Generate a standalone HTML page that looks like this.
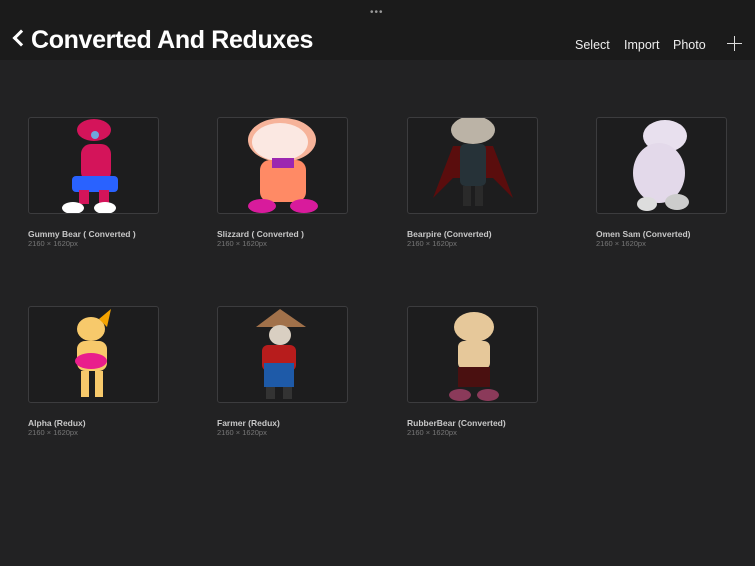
<!DOCTYPE html>
<html><head><meta charset="utf-8"><style>
*{margin:0;padding:0;box-sizing:border-box}
body{width:755px;height:566px;background:#222223;font-family:"Liberation Sans",sans-serif;position:relative;overflow:hidden;color:#fff}
.hdr{position:absolute;left:0;top:0;width:755px;height:60px;background:#1b1b1b}
.dots{position:absolute;left:370px;top:7px;font-size:10px;color:#999;letter-spacing:1px}
.title{position:absolute;left:31px;top:26px;font-size:25px;font-weight:bold;letter-spacing:-0.35px}
.back{position:absolute;top:32px;width:12px;height:12px;border-left:3px solid #fff;border-bottom:3px solid #fff;transform:rotate(45deg);left:15px}
.nav{position:absolute;top:38px;font-size:12.5px;color:#eee}
.plus{position:absolute;left:727px;top:36px;width:15px;height:15px}
.plus:before{content:"";position:absolute;left:7px;top:0;width:1px;height:15px;background:#ddd}
.plus:after{content:"";position:absolute;left:0;top:7px;width:15px;height:1px;background:#ddd}
.card{position:absolute;width:131px;height:97px;background:#1d1d1e;border:1px solid #3c3c3e;border-radius:3px;overflow:hidden}
.name{position:absolute;font-size:8.5px;font-weight:bold;color:#c8c8c8}
.sz{position:absolute;font-size:7.5px;color:#777}
.card svg{position:absolute;left:0;top:0}
</style></head><body>
<div class="hdr"></div>
<div class="dots">•••</div>
<div class="back"></div>
<div class="title">Converted And Reduxes</div>
<div class="nav" style="left:575px">Select</div>
<div class="nav" style="left:624px">Import</div>
<div class="nav" style="left:673px">Photo</div>
<div class="plus"></div>

<div class="card" style="left:28px;top:117px"><svg width="131" height="97">
<ellipse cx="65" cy="12" rx="17" ry="11" fill="#d4145a"/><circle cx="66" cy="17" r="4" fill="#6fa8dc"/>
<rect x="52" y="26" width="30" height="38" rx="10" fill="#d4145a"/><rect x="43" y="58" width="46" height="16" rx="4" fill="#2962ff"/>
<rect x="50" y="72" width="10" height="14" fill="#d4145a"/><rect x="70" y="72" width="10" height="14" fill="#d4145a"/>
<ellipse cx="44" cy="90" rx="11" ry="6" fill="#fff"/><ellipse cx="76" cy="90" rx="11" ry="6" fill="#fff"/></svg></div>
<div class="name" style="left:28px;top:229px">Gummy Bear ( Converted )</div><div class="sz" style="left:28px;top:239px">2160 × 1620px</div>

<div class="card" style="left:217px;top:117px"><svg width="131" height="97">
<ellipse cx="64" cy="22" rx="34" ry="22" fill="#f6b39a"/><ellipse cx="62" cy="24" rx="28" ry="19" fill="#fbe8e2"/>
<rect x="42" y="42" width="46" height="42" rx="10" fill="#ff8a65"/><rect x="54" y="40" width="22" height="10" fill="#9c27b0"/>
<ellipse cx="44" cy="88" rx="14" ry="7" fill="#d81b9c"/><ellipse cx="86" cy="88" rx="14" ry="7" fill="#d81b9c"/></svg></div>
<div class="name" style="left:217px;top:229px">Slizzard ( Converted )</div><div class="sz" style="left:217px;top:239px">2160 × 1620px</div>

<div class="card" style="left:407px;top:117px"><svg width="131" height="97">
<ellipse cx="65" cy="12" rx="22" ry="14" fill="#bbb3a6"/><path d="M25 80 L45 28 L85 28 L105 80 L85 60 L45 60 Z" fill="#5a0d0d"/>
<rect x="52" y="26" width="26" height="42" rx="5" fill="#263238"/><rect x="55" y="68" width="8" height="20" fill="#2a2a2a"/><rect x="67" y="68" width="8" height="20" fill="#2a2a2a"/></svg></div>
<div class="name" style="left:407px;top:229px">Bearpire (Converted)</div><div class="sz" style="left:407px;top:239px">2160 × 1620px</div>

<div class="card" style="left:596px;top:117px"><svg width="131" height="97">
<ellipse cx="68" cy="18" rx="22" ry="16" fill="#e8e0ee"/><ellipse cx="62" cy="55" rx="26" ry="30" fill="#e3d9ea"/>
<ellipse cx="50" cy="86" rx="10" ry="7" fill="#ddd"/><ellipse cx="80" cy="84" rx="12" ry="8" fill="#ccc"/></svg></div>
<div class="name" style="left:596px;top:229px">Omen Sam (Converted)</div><div class="sz" style="left:596px;top:239px">2160 × 1620px</div>

<div class="card" style="left:28px;top:306px"><svg width="131" height="97">
<ellipse cx="62" cy="22" rx="14" ry="12" fill="#f7c96b"/><path d="M70 12 L82 2 L78 20Z" fill="#f4a300"/>
<rect x="48" y="34" width="30" height="30" rx="8" fill="#f7c96b"/><ellipse cx="62" cy="54" rx="16" ry="8" fill="#e91e8c"/>
<rect x="52" y="64" width="8" height="26" fill="#f7c96b"/><rect x="66" y="64" width="8" height="26" fill="#f7c96b"/></svg></div>
<div class="name" style="left:28px;top:418px">Alpha (Redux)</div><div class="sz" style="left:28px;top:428px">2160 × 1620px</div>

<div class="card" style="left:217px;top:306px"><svg width="131" height="97">
<path d="M38 20 L62 2 L88 20Z" fill="#a1714a"/><ellipse cx="62" cy="28" rx="11" ry="10" fill="#d9cfc2"/>
<rect x="44" y="38" width="34" height="26" rx="6" fill="#b71c1c"/><rect x="46" y="56" width="30" height="24" fill="#1e5aa8"/>
<rect x="48" y="80" width="9" height="12" fill="#333"/><rect x="65" y="80" width="9" height="12" fill="#333"/></svg></div>
<div class="name" style="left:217px;top:418px">Farmer (Redux)</div><div class="sz" style="left:217px;top:428px">2160 × 1620px</div>

<div class="card" style="left:407px;top:306px"><svg width="131" height="97">
<ellipse cx="66" cy="20" rx="20" ry="15" fill="#e6c89a"/><rect x="50" y="34" width="32" height="28" rx="6" fill="#e6c89a"/>
<rect x="50" y="60" width="32" height="20" fill="#4a1010"/><ellipse cx="52" cy="88" rx="11" ry="6" fill="#8b3a5a"/><ellipse cx="80" cy="88" rx="11" ry="6" fill="#8b3a5a"/></svg></div>
<div class="name" style="left:407px;top:418px">RubberBear (Converted)</div><div class="sz" style="left:407px;top:428px">2160 × 1620px</div>
</body></html>
